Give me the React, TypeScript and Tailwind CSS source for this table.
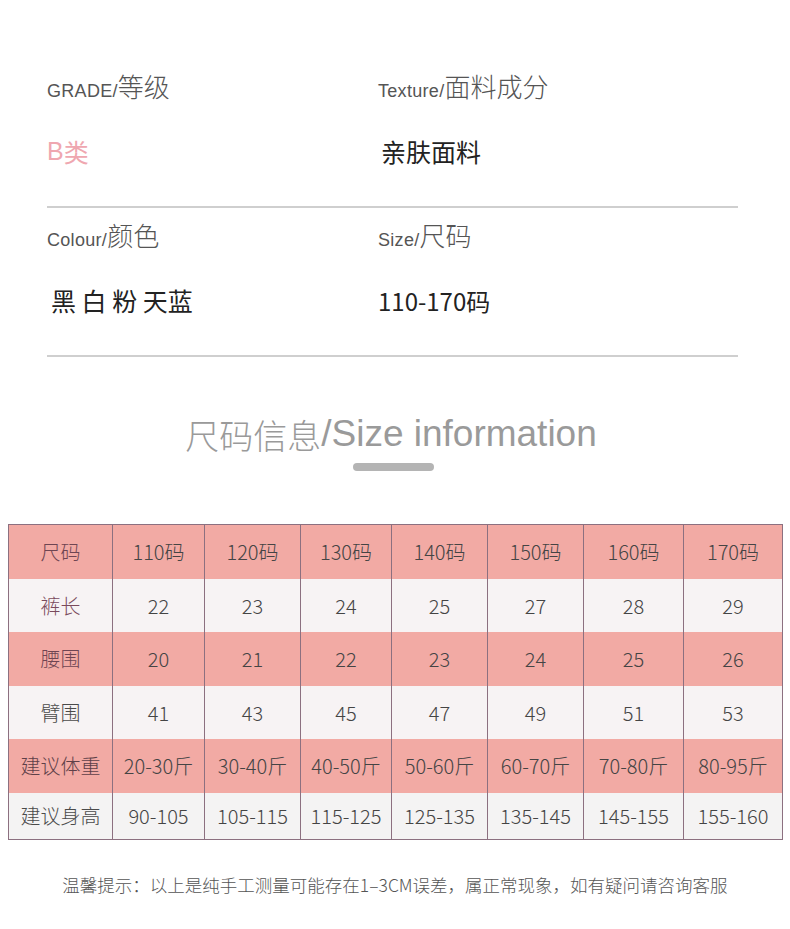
const sizes = ["110码", "120码", "130码", "140码", "150码", "160码", "170码"];

type Row = {
  label: string;
  values: string[];
  bg: string;
  labelColor: string;
  height: string;
};

const rows: Row[] = [
  { label: "尺码", values: sizes, bg: "bg-[#f2aaa4]", labelColor: "text-[#6e4552]", height: "h-[54px]" },
  { label: "裤长", values: ["22", "23", "24", "25", "27", "28", "29"], bg: "bg-[#f7f3f4]", labelColor: "text-[#7a4a5c]", height: "h-[53px]" },
  { label: "腰围", values: ["20", "21", "22", "23", "24", "25", "26"], bg: "bg-[#f2aaa4]", labelColor: "text-[#6e4552]", height: "h-[54px]" },
  { label: "臂围", values: ["41", "43", "45", "47", "49", "51", "53"], bg: "bg-[#f7f3f4]", labelColor: "text-[#4a4a4a]", height: "h-[53px]" },
  {
    label: "建议体重",
    values: ["20-30斤", "30-40斤", "40-50斤", "50-60斤", "60-70斤", "70-80斤", "80-95斤"],
    bg: "bg-[#f2aaa4]",
    labelColor: "text-[#5e4048]",
    height: "h-[54px]",
  },
  {
    label: "建议身高",
    values: ["90-105", "105-115", "115-125", "125-135", "135-145", "145-155", "155-160"],
    bg: "bg-[#f4f3f3]",
    labelColor: "text-[#4a4a4a]",
    height: "h-[46px]",
  },
];

const latin = "font-['Liberation_Sans','Noto_Sans_CJK_SC',sans-serif]";
const cjk = "font-['Noto_Sans_CJK_SC',sans-serif]";

function Label({ en, zh }: { en: string; zh: string }) {
  return (
    <div className="h-[34px] -mt-[3px] leading-[34px] whitespace-nowrap text-[#555]">
      <span className={`${latin} text-[18px] tracking-[0.3px]`}>{en}/</span>
      <span className={`${cjk} text-[26px] font-light`}>{zh}</span>
    </div>
  );
}

function Value({ children, className }: { children: React.ReactNode; className?: string }) {
  return (
    <div className={`h-[34px] mt-[32px] flex items-center text-[25px] ${cjk} ${className ?? ""}`}>
      {children}
    </div>
  );
}

export default function App() {
  return (
    <div className="w-[790px] h-[929px] bg-white overflow-hidden">
      <div className="pt-[72px] pl-[47px] pr-[52px]">
        <div className="grid grid-cols-[331px_1fr]">
          <div>
            <Label en="GRADE" zh="等级" />
            <Value className="text-[#efa7b0]">
              <span className={`${latin} text-[25px]`}>B</span>类
            </Value>
          </div>
          <div>
            <Label en="Texture" zh="面料成分" />
            <Value className="text-[#222] ml-[3px]">亲肤面料</Value>
          </div>
        </div>
        <div className="mt-[37px] h-[2px] bg-[#cfcfcf]" />
        <div className="grid grid-cols-[331px_1fr] mt-[13px]">
          <div>
            <Label en="Colour" zh="颜色" />
            <Value className="text-[#222] ml-[4px]">黑 白 粉 天蓝</Value>
          </div>
          <div>
            <Label en="Size" zh="尺码" />
            <Value className="text-[#222]">
              <span className="text-[24px]">110-170码</span>
            </Value>
          </div>
        </div>
        <div className="mt-[37px] h-[2px] bg-[#cfcfcf]" />
      </div>

      <div className="mt-[55px] flex flex-col items-center">
        <div className="h-[44px] flex items-center text-[#9a9a9a] -ml-[8px]">
          <span className={`${cjk} text-[34px] font-light`}>尺码信息</span>
          <span className={`${latin} text-[37px]`}>/Size information</span>
        </div>
        <div className="mt-[7px] w-[81px] h-[8px] rounded-full bg-[#b4b4b4] -ml-[3px]" />
      </div>

      <div className="mt-[53px] ml-[8px] w-[775px] border border-[#8c7080]">
        {rows.map((row) => (
          <div
            key={row.label}
            className={`grid grid-cols-[103px_92px_96px_91px_96px_96px_100px_99px] ${row.bg} ${row.height}`}
          >
            <div className={`flex items-center justify-center text-[20px] font-light ${cjk} ${row.labelColor}`}>
              {row.label}
            </div>
            {row.values.map((v, i) => (
              <div
                key={i}
                className={`flex items-center justify-center border-l border-[#8c7080] text-[20px] font-light text-[#444] ${cjk}`}
              >
                {v}
              </div>
            ))}
          </div>
        ))}
      </div>

      <div className={`mt-[32px] text-center text-[17.5px] font-light text-[#555] ${cjk}`}>
        温馨提示：以上是纯手工测量可能存在1–3CM误差，属正常现象，如有疑问请咨询客服
      </div>
    </div>
  );
}
